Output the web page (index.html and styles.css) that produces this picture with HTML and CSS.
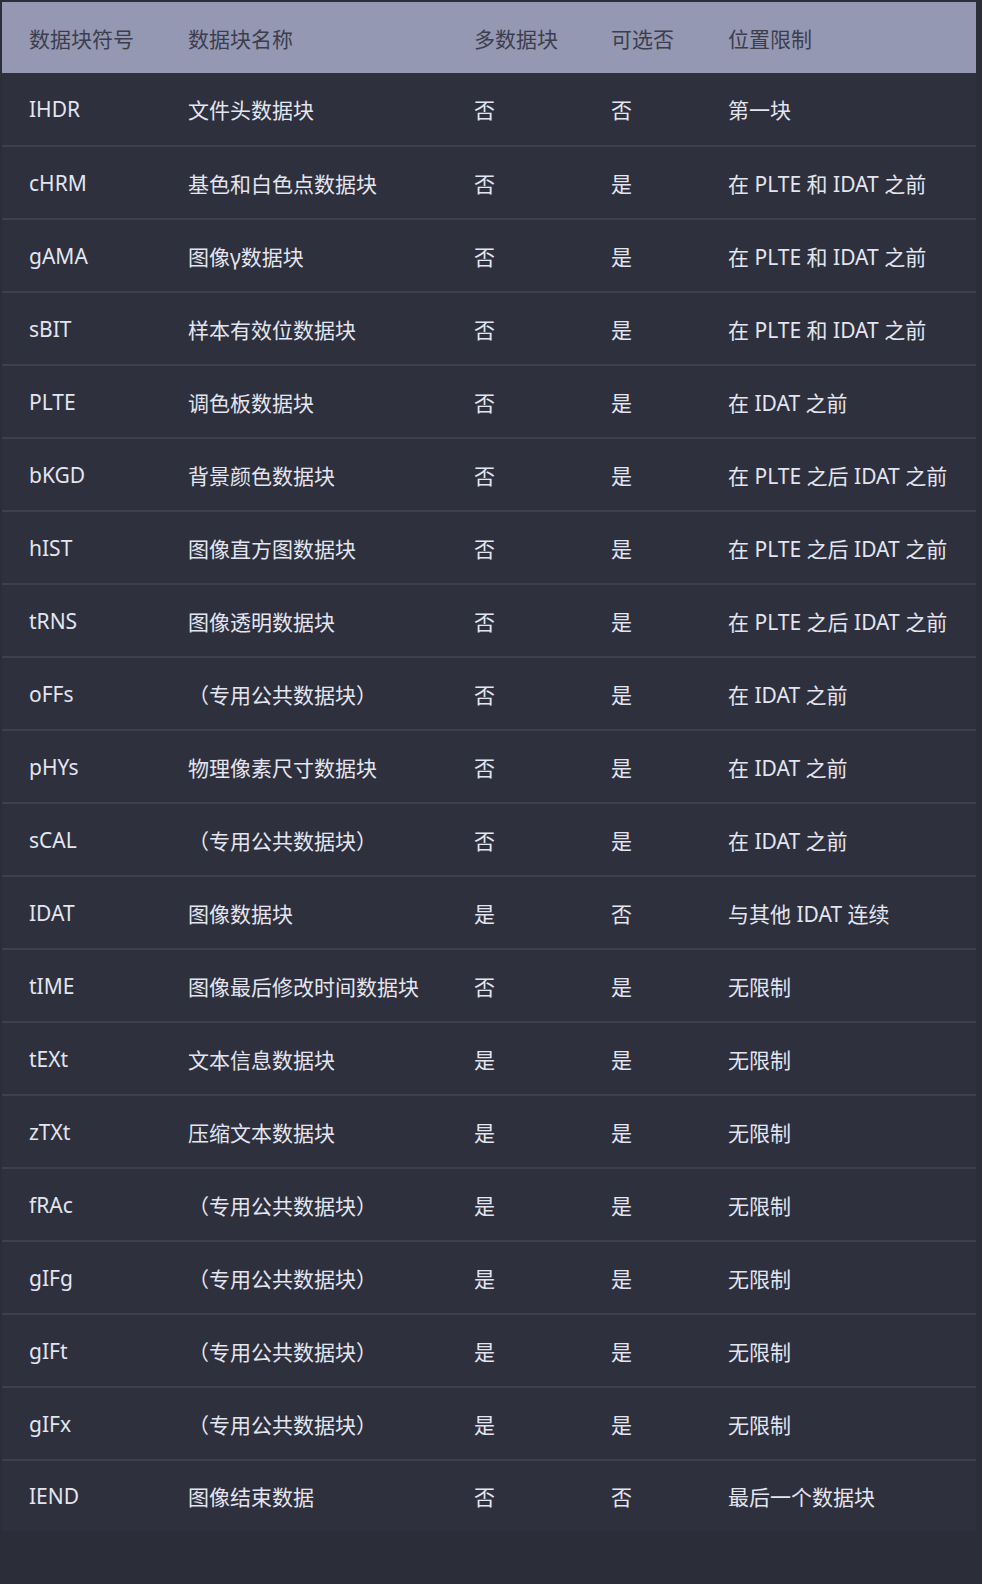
FILE: index.html
```html
<!DOCTYPE html>
<html lang="zh-CN">
<head>
<meta charset="utf-8">
<title>PNG 数据块</title>
<link rel="stylesheet" href="styles.css">
</head>
<body>
<table class="chunks">
  <colgroup>
    <col class="c1"><col class="c2"><col class="c3"><col class="c4"><col class="c5">
  </colgroup>
  <thead>
    <tr><th>数据块符号</th><th>数据块名称</th><th>多数据块</th><th>可选否</th><th>位置限制</th></tr>
  </thead>
  <tbody>
    <tr><td>IHDR</td><td>文件头数据块</td><td>否</td><td>否</td><td>第一块</td></tr>
    <tr><td>cHRM</td><td>基色和白色点数据块</td><td>否</td><td>是</td><td>在 PLTE 和 IDAT 之前</td></tr>
    <tr><td>gAMA</td><td>图像γ数据块</td><td>否</td><td>是</td><td>在 PLTE 和 IDAT 之前</td></tr>
    <tr><td>sBIT</td><td>样本有效位数据块</td><td>否</td><td>是</td><td>在 PLTE 和 IDAT 之前</td></tr>
    <tr><td>PLTE</td><td>调色板数据块</td><td>否</td><td>是</td><td>在 IDAT 之前</td></tr>
    <tr><td>bKGD</td><td>背景颜色数据块</td><td>否</td><td>是</td><td>在 PLTE 之后 IDAT 之前</td></tr>
    <tr><td>hIST</td><td>图像直方图数据块</td><td>否</td><td>是</td><td>在 PLTE 之后 IDAT 之前</td></tr>
    <tr><td>tRNS</td><td>图像透明数据块</td><td>否</td><td>是</td><td>在 PLTE 之后 IDAT 之前</td></tr>
    <tr><td>oFFs</td><td>（专用公共数据块）</td><td>否</td><td>是</td><td>在 IDAT 之前</td></tr>
    <tr><td>pHYs</td><td>物理像素尺寸数据块</td><td>否</td><td>是</td><td>在 IDAT 之前</td></tr>
    <tr><td>sCAL</td><td>（专用公共数据块）</td><td>否</td><td>是</td><td>在 IDAT 之前</td></tr>
    <tr><td>IDAT</td><td>图像数据块</td><td>是</td><td>否</td><td>与其他 IDAT 连续</td></tr>
    <tr><td>tIME</td><td>图像最后修改时间数据块</td><td>否</td><td>是</td><td>无限制</td></tr>
    <tr><td>tEXt</td><td>文本信息数据块</td><td>是</td><td>是</td><td>无限制</td></tr>
    <tr><td>zTXt</td><td>压缩文本数据块</td><td>是</td><td>是</td><td>无限制</td></tr>
    <tr><td>fRAc</td><td>（专用公共数据块）</td><td>是</td><td>是</td><td>无限制</td></tr>
    <tr><td>gIFg</td><td>（专用公共数据块）</td><td>是</td><td>是</td><td>无限制</td></tr>
    <tr><td>gIFt</td><td>（专用公共数据块）</td><td>是</td><td>是</td><td>无限制</td></tr>
    <tr><td>gIFx</td><td>（专用公共数据块）</td><td>是</td><td>是</td><td>无限制</td></tr>
    <tr><td>IEND</td><td>图像结束数据</td><td>否</td><td>否</td><td>最后一个数据块</td></tr>
  </tbody>
</table>
</body>
</html>
```

FILE: styles.css
```css
html, body {
  margin: 0;
  background: #2b2d39;
}
body {
  padding: 2px 6px 0 2px;
  font-family: "Noto Sans", "Noto Sans CJK SC", sans-serif;
  font-size: 21px;
}
.chunks {
  width: 974px;
  border-collapse: collapse;
  table-layout: fixed;
}
.c1 { width: 159px; }
.c2 { width: 286px; }
.c3 { width: 137px; }
.c4 { width: 117px; }
.c5 { width: 275px; }

.chunks th {
  height: 71px;
  padding: 0 0 0 27px;
  background: #9598b2;
  color: #3c3e4e;
  font-weight: normal;
  text-align: left;
  vertical-align: middle;
  box-sizing: border-box;
}
.chunks td {
  height: 73px;
  padding: 0 0 0 27px;
  background: #2e303d;
  color: #e3e5f0;
  white-space: nowrap;
  vertical-align: middle;
  box-sizing: border-box;
}
.chunks tbody tr {
  border-bottom: 2px solid #3d4050;
}
.chunks tbody tr:last-child {
  border-bottom: none;
}
.chunks tbody tr:last-child td {
  height: 71px;
}
```
